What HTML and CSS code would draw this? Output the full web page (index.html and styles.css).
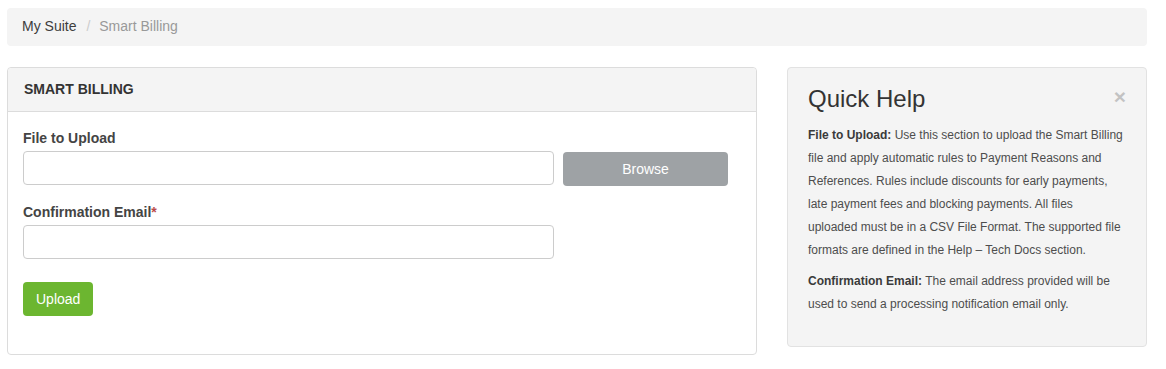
FILE: index.html
```html
<!DOCTYPE html>
<html>

<head>
	<meta charset="UTF-8">
	<title>Smart Billing</title>
	<link rel="stylesheet" href="styles.css">
</head>

<body>
	<div class="page">

		<ol class="breadcrumb">
			<li><a href="#">My Suite</a></li>
			<li class="active">Smart Billing</li>
		</ol>

		<div class="columns">

			<div class="panel">
				<div class="panel-heading">Smart Billing</div>
				<div class="panel-body">
					<div class="form-group">
						<label for="file">File to Upload</label>
						<div class="file-row">
							<input type="text" id="file" class="form-control">
							<button class="btn btn-browse">Browse</button>
						</div>
					</div>
					<div class="form-group">
						<label for="email">Confirmation Email<span class="required">*</span></label>
						<input type="email" id="email" class="form-control">
					</div>
					<button class="btn btn-upload">Upload</button>
				</div>
			</div>

			<div class="well">
				<div class="well-title">
					<h3>Quick Help</h3>
					<button class="close">&times;</button>
				</div>
				<p><strong>File to Upload:</strong> Use this section to upload the Smart Billing file and apply
					automatic rules to Payment Reasons and References. Rules include discounts for early payments,
					late payment fees and blocking payments. All files<br>uploaded must be in a CSV File Format. The
					supported file formats are defined in the Help &ndash; Tech Docs section.</p>
				<p><strong>Confirmation Email:</strong> The email address provided will be used to send a
					processing notification email only.</p>
			</div>

		</div>
	</div>
</body>

</html>
```

FILE: styles.css
```css
html,
body {
	margin: 0;
	padding: 0;
	background: #fff;
}

body {
	font-family: "Liberation Sans", Arial, sans-serif;
	font-size: 14px;
	color: #444;
}

.page {
	width: 1140px;
	padding: 8px 0 0 7px;
}

/* breadcrumb */

.breadcrumb {
	display: flex;
	list-style: none;
	margin: 0 0 21px 0;
	padding: 9px 15px 10px 15px;
	line-height: 19px;
	background: #f4f4f4;
	border-radius: 4px;
}

.breadcrumb a {
	color: #3d3d3d;
	text-decoration: none;
}

.breadcrumb li + li:before {
	content: "/\00a0";
	padding: 0 5px 0 10px;
	color: #ccc;
}

.breadcrumb .active {
	color: #999;
}

.columns {
	display: flex;
	gap: 30px;
	align-items: flex-start;
}

/* left panel */

.panel {
	width: 750px;
	box-sizing: border-box;
	border: 1px solid #dcdcdc;
	border-radius: 4px;
}

.panel-heading {
	padding: 12px 16px;
	line-height: 19px;
	font-size: 14px;
	font-weight: 700;
	text-transform: uppercase;
	color: #333;
	background: #f4f4f4;
	border-bottom: 1px solid #dcdcdc;
	border-radius: 4px 4px 0 0;
}

.panel-body {
	padding: 16px 15px 38px 15px;
}

.form-group {
	margin-bottom: 16px;
}

.form-group label {
	display: block;
	margin-bottom: 3px;
	line-height: 20px;
	font-size: 14px;
	font-weight: 700;
	color: #444;
}

.required {
	color: #b94a48;
}

.form-control {
	display: block;
	width: 531px;
	height: 34px;
	box-sizing: border-box;
	margin: 0;
	padding: 6px 12px;
	border: 1px solid #ccc;
	border-radius: 4px;
	font: inherit;
}

.file-row {
	display: flex;
	align-items: flex-start;
	gap: 9px;
}

.btn {
	height: 34px;
	box-sizing: border-box;
	padding: 6px 12px;
	border: 1px solid transparent;
	border-radius: 4px;
	font-family: inherit;
	font-size: 14px;
	line-height: 20px;
	color: #fff;
	cursor: pointer;
}

.btn-browse {
	width: 165px;
	margin-top: 1px;
	background: #9ea2a5;
}

.btn-upload {
	display: block;
	margin-top: 23px;
	background: #6cb630;
}

/* quick help */

.well {
	width: 360px;
	box-sizing: border-box;
	padding: 18px 20px 22px 20px;
	background: #f4f4f4;
	border: 1px solid #e2e2e2;
	border-radius: 4px;
	font-size: 12px;
	line-height: 23px;
	color: #4d4d4d;
}

.well-title {
	display: flex;
	justify-content: space-between;
	align-items: flex-start;
	margin-bottom: 12px;
}

.well h3 {
	margin: 0;
	font-size: 24px;
	font-weight: 400;
	line-height: 1.1;
	color: #333;
}

.close {
	padding: 0;
	border: 0;
	background: none;
	font-family: inherit;
	font-size: 21px;
	font-weight: 700;
	line-height: 1;
	color: #000;
	opacity: 0.2;
	cursor: pointer;
}

.well p {
	margin: 0 0 8px 0;
}

.well strong {
	color: #3a3a3a;
}
```
